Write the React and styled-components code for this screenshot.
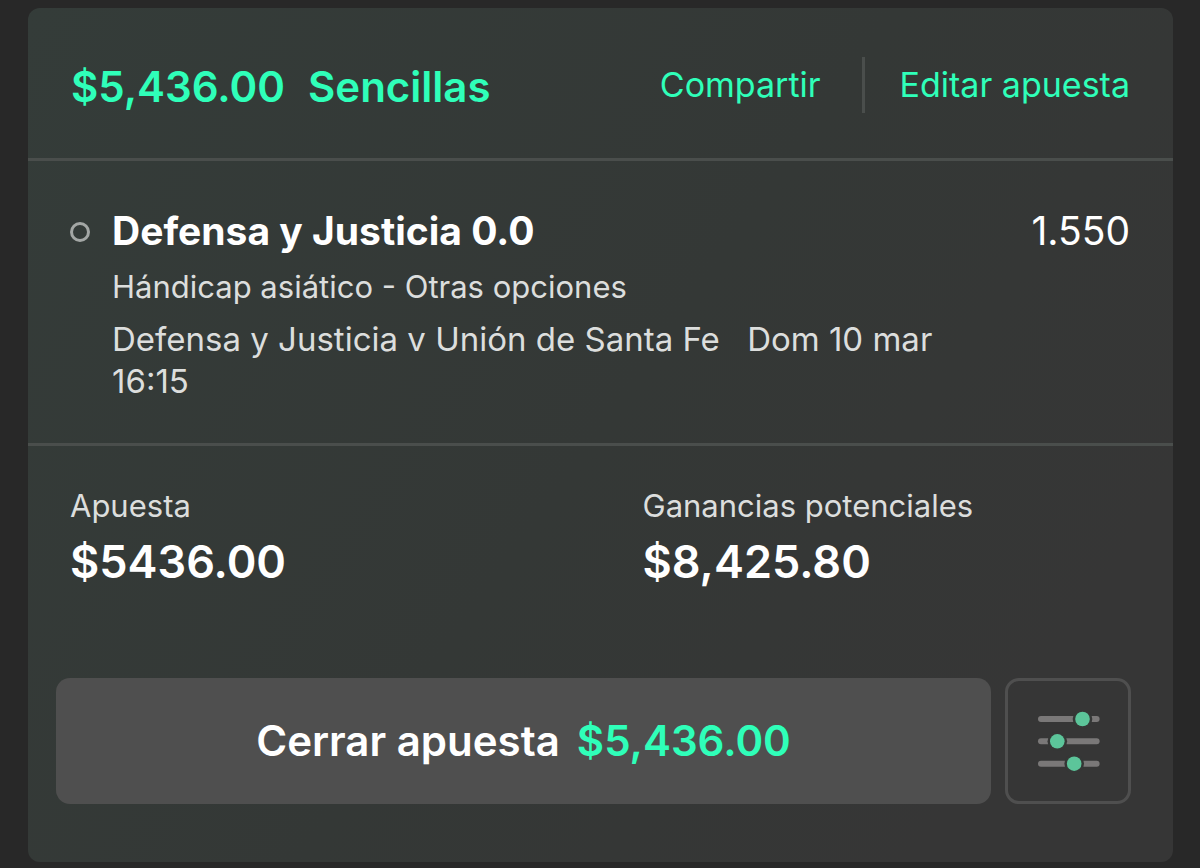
import styled, { createGlobalStyle, ThemeProvider } from "styled-components";

const theme = {
    pageBg: '#282828',
    accent: '#2fffb9',
    line: '#4a4e4c',
    buttonBg: '#4f4f4f',
    fontColor: '#ffffff',
    fontColor2: '#dcdedd',
}

const GlobalStyle = createGlobalStyle`
    body {
        margin: 0;
        background-color: ${p => p.theme.pageBg};
        font-family: Inter, "Liberation Sans", sans-serif;
        color: ${p => p.theme.fontColor};
    }
    h2, h3, p, dl, dt, dd {
        margin: 0;
    }
    button {
        font-family: inherit;
        cursor: pointer;
    }
`
const Page = styled.main`
    box-sizing: border-box;
    padding: 8px 27px 6px 28px;
`
const Card = styled.article`
    border-radius: 12px;
    background: linear-gradient(125deg, #343c39 0%, #343836 50%, #363636 85%);
`
const Header = styled.header`
    display: flex;
    align-items: center;
    justify-content: space-between;
    box-sizing: border-box;
    min-height: 153px;
    padding: 4px 43px 0 43px;
    border-bottom: 3px solid ${p => p.theme.line};
`
const Title = styled.h2`
    display: flex;
    gap: 23px;
    padding-top: 4px;
    font-size: 42px;
    line-height: 50px;
    font-weight: 600;
    color: ${p => p.theme.accent};
`
const Actions = styled.div`
    display: flex;
    align-items: center;
`
const Action = styled.button`
    padding: 0;
    border: none;
    background: none;
    font-size: 34px;
    line-height: 56px;
    color: ${p => p.theme.accent};

    & + & {
        margin-left: 41px;
        padding-left: 35px;
        border-left: 3px solid ${p => p.theme.line};
    }
`
const Selection = styled.section`
    display: grid;
    grid-template-columns: 42px 1fr auto;
    padding: 45px 43px 41px 42px;
    border-bottom: 3px solid ${p => p.theme.line};
`
const Marker = styled.span`
    box-sizing: border-box;
    width: 20px;
    height: 20px;
    margin-top: 16px;
    border: 3px solid #a3a7a5;
    border-radius: 50%;
`
const SelectionName = styled.h3`
    font-size: 39px;
    line-height: 50px;
    font-weight: 700;
`
const Odds = styled.span`
    font-size: 39px;
    line-height: 50px;
`
const Market = styled.p`
    margin-top: 8px;
    font-size: 31px;
    line-height: 46px;
    color: ${p => p.theme.fontColor2};
`
const Fixture = styled.p`
    max-width: 860px;
    margin-top: 8px;
    font-size: 33px;
    line-height: 42px;
    color: ${p => p.theme.fontColor2};
`
const Teams = styled.span`
    margin-right: 18px;
`
const Totals = styled.dl`
    display: grid;
    grid-template-columns: 1fr 1fr;
    padding: 40px 0 88px;
`
const Total = styled.div`
    padding-left: 42px;
`
const Label = styled.dt`
    font-size: 31px;
    line-height: 40px;
    color: ${p => p.theme.fontColor2};
`
const Amount = styled.dd`
    margin-top: 8px;
    font-size: 45px;
    line-height: 56px;
    font-weight: 600;
`
const Footer = styled.footer`
    display: flex;
    gap: 14px;
    padding: 0 42px 58px 28px;
`
const CashOut = styled.button`
    display: flex;
    flex: 1;
    align-items: center;
    justify-content: center;
    gap: 17px;
    height: 126px;
    padding: 0 0 2px;
    border: none;
    border-radius: 14px;
    background-color: ${p => p.theme.buttonBg};
    font-size: 42px;
    font-weight: 600;
    color: ${p => p.theme.fontColor};
`
const CashOutValue = styled.span`
    color: ${p => p.theme.accent};
`
const Settings = styled.button`
    display: flex;
    align-items: center;
    justify-content: center;
    width: 126px;
    height: 126px;
    padding: 0;
    border: 3px solid ${p => p.theme.buttonBg};
    border-radius: 14px;
    background: none;
`

const sliders = [
    { y: 8, knob: 46.5 },
    { y: 30.3, knob: 21.3 },
    { y: 52.7, knob: 38.2 },
]

const SlidersIcon = () => (
    <svg width="64" height="61" viewBox="0 0 64 61" aria-hidden="true">
        {sliders.map(({ y, knob }) => (
            <g key={y}>
                <path d={`M5 ${y}H60.6`} stroke="#7a7878" strokeWidth="6" strokeLinecap="round" />
                <circle cx={knob} cy={y} r="9.8" fill="#353736" />
                <circle cx={knob} cy={y} r="7.3" fill="#5cc59a" />
            </g>
        ))}
    </svg>
)

const BetCard = () => {
    return (
        <Card>
            <Header>
                <Title>
                    <span>$5,436.00</span>
                    <span>Sencillas</span>
                </Title>
                <Actions>
                    <Action type="button">Compartir</Action>
                    <Action type="button">Editar apuesta</Action>
                </Actions>
            </Header>
            <Selection>
                <Marker />
                <div>
                    <SelectionName>Defensa y Justicia 0.0</SelectionName>
                    <Market>Hándicap asiático - Otras opciones</Market>
                    <Fixture>
                        <Teams>Defensa y Justicia v Unión de Santa Fe</Teams> <span>Dom 10 mar</span> <time>16:15</time>
                    </Fixture>
                </div>
                <Odds>1.550</Odds>
            </Selection>
            <Totals>
                <Total>
                    <Label>Apuesta</Label>
                    <Amount>$5436.00</Amount>
                </Total>
                <Total>
                    <Label>Ganancias potenciales</Label>
                    <Amount>$8,425.80</Amount>
                </Total>
            </Totals>
            <Footer>
                <CashOut type="button">
                    Cerrar apuesta <CashOutValue>$5,436.00</CashOutValue>
                </CashOut>
                <Settings type="button" aria-label="Ajustes">
                    <SlidersIcon />
                </Settings>
            </Footer>
        </Card>
    );
}

const App = () => (
    <ThemeProvider theme={theme}>
        <GlobalStyle />
        <Page>
            <BetCard />
        </Page>
    </ThemeProvider>
)

export default App;
